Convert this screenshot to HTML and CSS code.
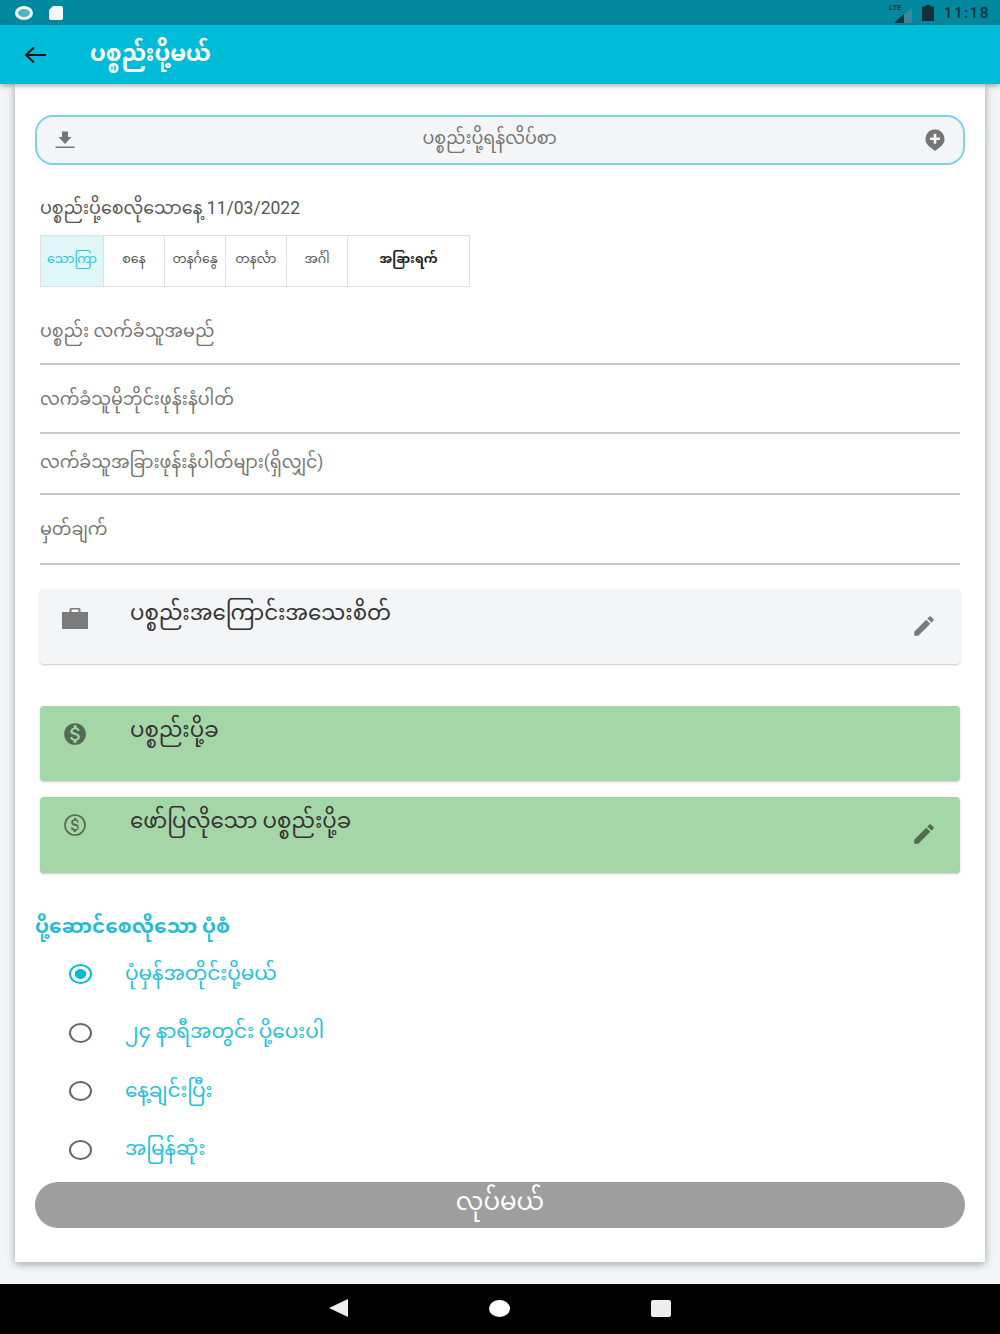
FILE: index.html
```html
<!DOCTYPE html>
<html lang="my">
<head>
    <meta charset="UTF-8">
    <title>ပစ္စည်းပို့မယ်</title>
    <link rel="stylesheet" href="styles.css">
</head>
<body>
    <div class="status-bar">
        <div class="status-left">
            <span class="status-ring"></span>
            <svg class="status-card" viewBox="0 0 16 16"><path d="M5 1h8a2 2 0 0 1 2 2v10a2 2 0 0 1-2 2H3a2 2 0 0 1-2-2V5z" fill="#f2fafb"/></svg>
        </div>
        <div class="status-right">
            <svg class="status-signal" viewBox="0 0 24 20"><text x="0" y="7" class="lte-text">LTE</text><path d="M23 5v15H5z" fill="#3f8796"/><path d="M15 11v9H5z" fill="#14343e"/></svg>
            <svg class="status-battery" viewBox="0 0 12 16"><path d="M3.500 0h5v1.500H12V16H0V1.500h3.500z" fill="#10303a"/></svg>
            <span class="status-time">11:18</span>
        </div>
    </div>

    <header class="app-bar">
        <svg class="back-icon" viewBox="0 0 24 24"><path d="M23 12H3M11 4.500 3 12l8 7.500"/></svg>
        <h1>ပစ္စည်းပို့မယ်</h1>
    </header>

    <main class="sheet">
        <div class="upload-row">
            <svg class="icon-grey" viewBox="0 0 24 24"><path d="M15 9h3.500L12 16 5.500 9H9V3.500h6zM2.500 18.500h19V20h-19z"/></svg>
            <span class="upload-text">ပစ္စည်းပို့ရန်လိပ်စာ</span>
            <svg class="icon-grey" viewBox="0 0 24 24"><path d="M12 1.500a9.500 9.500 0 0 0-6.700 16.200L12 23l6.700-5.300A9.500 9.500 0 0 0 12 1.500zm5 10.500h-3.700v3.700h-2.600V12H7V9.400h3.700V5.700h2.600v3.700H17z" fill-rule="evenodd"/></svg>
        </div>

        <p class="date-line">ပစ္စည်းပို့စေလိုသောနေ့ 11/03/2022</p>

        <div class="tabs">
            <div class="tab tab-active">သောကြာ</div>
            <div class="tab">စနေ</div>
            <div class="tab">တနင်္ဂနွေ</div>
            <div class="tab">တနင်္လာ</div>
            <div class="tab">အင်္ဂါ</div>
            <div class="tab tab-other">အခြားရက်</div>
        </div>

        <div class="field field-a">ပစ္စည်း လက်ခံသူအမည်</div>
        <div class="field field-b">လက်ခံသူမိုဘိုင်းဖုန်းနံပါတ်</div>
        <div class="field field-c">လက်ခံသူအခြားဖုန်းနံပါတ်များ(ရှိလျှင်)</div>
        <div class="field field-d">မှတ်ချက်</div>

        <div class="card card-grey">
            <svg class="card-icon" viewBox="0 0 26 24"><path d="M9 3h8a1.500 1.500 0 0 1 1.500 1.500V7H26v17H0V7h7.500V4.500A1.500 1.500 0 0 1 9 3zm.500 1.500V7h7V4.500z" fill-rule="evenodd"/></svg>
            <span class="card-text">ပစ္စည်းအကြောင်းအသေးစိတ်</span>
            <svg class="edit-icon" viewBox="0 0 24 24"><path d="M3 17.250V21h3.750L17.800 9.940l-3.750-3.750zM20.700 7.040a1 1 0 0 0 0-1.410l-2.340-2.340a1 1 0 0 0-1.410 0l-1.830 1.830 3.750 3.750z"/></svg>
        </div>

        <div class="card card-green card-first">
            <svg class="card-icon" viewBox="0 0 24 24"><path d="M12 2a10 10 0 1 0 0 20 10 10 0 0 0 0-20zm1.400 16.100V20h-2.700v-1.900c-1.700-.4-3.100-1.500-3.200-3.400h2c.1 1 .8 1.800 2.600 1.800 1.900 0 2.300-.9 2.300-1.500 0-.8-.4-1.500-2.600-2-2.400-.6-4.100-1.600-4.100-3.600 0-1.700 1.400-2.800 3.100-3.200V4h2.700v1.900c1.900.5 2.800 1.900 2.900 3.400h-2c-.1-1.100-.6-1.800-2.200-1.800-1.500 0-2.400.7-2.400 1.600 0 .8.600 1.300 2.600 1.900 2 .5 4.100 1.400 4.100 3.800 0 1.800-1.300 2.800-3 3.300z"/></svg>
            <span class="card-text">ပစ္စည်းပို့ခ</span>
        </div>

        <div class="card card-green card-last">
            <svg class="card-icon" viewBox="0 0 24 24"><path d="M12 2a10 10 0 1 0 0 20 10 10 0 0 0 0-20zm0 18.500a8.500 8.500 0 1 1 0-17 8.500 8.500 0 0 1 0 17z"/><path d="M12.300 11.100c-1.700-.5-2.200-.9-2.200-1.600 0-.8.700-1.400 2-1.400 1.300 0 1.800.6 1.900 1.500h1.500c-.1-1.300-.8-2.400-2.400-2.800V5.500h-2v1.300c-1.500.3-2.600 1.300-2.600 2.800 0 1.800 1.500 2.600 3.600 3.100 1.900.5 2.300 1.100 2.300 1.800 0 .5-.4 1.300-2 1.300-1.500 0-2.200-.7-2.300-1.500H8.100c.1 1.600 1.300 2.500 2.700 2.800v1.400h2v-1.400c1.500-.3 2.700-1.200 2.700-2.800 0-2.200-1.700-3.200-3.200-3.700z"/></svg>
            <span class="card-text">ဖော်ပြလိုသော ပစ္စည်းပို့ခ</span>
            <svg class="edit-icon" viewBox="0 0 24 24"><path d="M3 17.250V21h3.750L17.800 9.940l-3.750-3.750zM20.700 7.040a1 1 0 0 0 0-1.410l-2.340-2.340a1 1 0 0 0-1.410 0l-1.830 1.830 3.750 3.750z"/></svg>
        </div>

        <h2 class="section-title">ပို့ဆောင်စေလိုသော ပုံစံ</h2>

        <div class="radio-list">
            <div class="radio-row"><span class="radio radio-on"></span><span class="radio-label">ပုံမှန်အတိုင်းပို့မယ်</span></div>
            <div class="radio-row"><span class="radio"></span><span class="radio-label">၂၄ နာရီအတွင်း ပို့ပေးပါ</span></div>
            <div class="radio-row"><span class="radio"></span><span class="radio-label">နေ့ချင်းပြီး</span></div>
            <div class="radio-row"><span class="radio"></span><span class="radio-label">အမြန်ဆုံး</span></div>
        </div>

        <button class="submit">လုပ်မယ်</button>
    </main>

    <div class="nav-bar">
        <span class="nav-back"></span>
        <span class="nav-home"></span>
        <span class="nav-recent"></span>
    </div>
</body>
</html>
```

FILE: styles.css
```css
* {
    box-sizing: border-box;
}

body {
    margin: 0;
    display: flex;
    flex-direction: column;
    height: 1334px;
    overflow: hidden;
    background: #f4f5f7;
    color: #616161;
    font-family: "Roboto", "Noto Sans Myanmar", "Padauk", "Noto Sans", sans-serif;
}

.status-bar {
    height: 25px;
    flex: none;
    display: flex;
    justify-content: space-between;
    align-items: center;
    padding: 0 10px 0 15px;
    background: #00889f;
}

.status-left,
.status-right {
    display: flex;
    align-items: center;
}

.status-ring {
    width: 18px;
    height: 14px;
    border: 3px solid #f2fafb;
    border-radius: 50%;
    background: #4fb3c4;
}

.status-card {
    width: 16px;
    height: 16px;
    margin-left: 15px;
}

.status-signal {
    width: 24px;
    height: 20px;
}

.lte-text {
    font-family: "Liberation Sans", sans-serif;
    font-size: 7px;
    font-weight: 700;
    fill: #14343e;
}

.status-battery {
    width: 12px;
    height: 16px;
    margin-left: 9px;
}

.status-time {
    margin-left: 10px;
    font-family: "Roboto", sans-serif;
    font-size: 15.500px;
    font-weight: 500;
    letter-spacing: 1.400px;
    color: #14343e;
}

.app-bar {
    position: relative;
    height: 59px;
    flex: none;
    display: flex;
    align-items: center;
    padding: 0 23px;
    background: #00bcd8;
    box-shadow: 0 2px 5px rgba(0, 0, 0, 0.3);
}

.back-icon {
    width: 24px;
    height: 24px;
    fill: none;
    stroke: #111;
    stroke-width: 2;
}

.app-bar h1 {
    margin: 0 0 4px 43px;
    font-size: 22.500px;
    line-height: 34px;
    font-weight: 700;
    color: #fff;
}

.sheet {
    flex: 1;
    margin: 0 15px 22px;
    padding: 31px 25px 0;
    background: #fff;
    box-shadow: 0 2px 8px rgba(0, 0, 0, 0.35);
}

.upload-row {
    height: 50px;
    margin: 0 -5px;
    display: flex;
    align-items: center;
    padding: 0 16px;
    background: #f4f5f7;
    border: 2px solid #7cd4e5;
    border-radius: 18px;
}

.upload-text {
    flex: 1;
    padding-right: 21px;
    text-align: center;
    font-size: 17.500px;
    color: #757575;
}

.icon-grey {
    width: 24px;
    height: 24px;
    fill: #757575;
}

.date-line {
    margin: 29px 0 13px;
    font-size: 17.500px;
    line-height: 28px;
    color: #555;
}

.tabs {
    width: 430px;
    height: 52px;
    display: flex;
    border: 1px solid #e0e0e0;
}

.tab {
    width: 61px;
    display: flex;
    align-items: center;
    justify-content: center;
    padding-bottom: 2px;
    font-size: 12.500px;
    color: #555;
    border-right: 1px solid #e0e0e0;
}

.tab-active {
    width: 63px;
    background: #e0f7fa;
    color: #26c6da;
}

.tab-other {
    flex: 1;
    border-right: none;
    font-weight: 700;
    color: #212121;
}

.field {
    display: flex;
    align-items: center;
    font-size: 17.500px;
    color: #757575;
    border-bottom: 2px solid #c8c8c8;
}

.field-a {
    height: 78px;
    padding-top: 16px;
}

.field-b {
    height: 69px;
    padding-top: 4px;
}

.field-c {
    height: 61px;
}

.field-d {
    height: 70px;
    padding-top: 4px;
}

.card {
    position: relative;
    height: 75px;
    margin-top: 16px;
    display: flex;
    align-items: flex-start;
    padding: 6px 22px;
    border-radius: 4px;
    box-shadow: 0 1px 2px rgba(0, 0, 0, 0.22);
    font-size: 21.300px;
    line-height: 30px;
    color: #333;
}

.card-grey {
    margin-top: 24px;
    background: #f4f5f7;
}

.card-green {
    background: #a5d6a7;
}

.card-first {
    margin-top: 42px;
}

.card-last {
    height: 76px;
}

.card-icon {
    width: 26px;
    height: 26px;
    margin-top: 9px;
    flex: none;
    fill: rgba(0, 0, 0, 0.5);
}

.card-text {
    margin: 3px 0 0 42px;
}

.edit-icon {
    position: absolute;
    right: 23px;
    top: 24px;
    width: 26px;
    height: 26px;
    fill: rgba(0, 0, 0, 0.5);
}

.section-title {
    margin: 36px 0 0 -5px;
    font-size: 20px;
    line-height: 34px;
    font-weight: 700;
    color: #26bcd6;
}

.radio-list {
    margin-top: 2px;
}

.radio-row {
    height: 58.500px;
    display: flex;
    align-items: center;
    gap: 33px;
    padding-left: 29px;
    font-size: 20px;
    color: #26c0da;
}

.radio-label {
    margin-top: 2px;
}

.radio {
    width: 23px;
    height: 20px;
    flex: none;
    border: 2px solid #666;
    border-radius: 50%;
}

.radio-on {
    border-color: #00bcd4;
    background: radial-gradient(ellipse, #00bcd4 0 5.500px, transparent 6px);
}

.submit {
    display: block;
    width: 930px;
    height: 46px;
    margin: 3px 0 0 -5px;
    padding: 0 0 6px;
    border: none;
    border-radius: 23px;
    background: #9e9e9e;
    color: #fff;
    font-family: inherit;
    font-size: 24.500px;
    line-height: 32px;
}

.nav-bar {
    height: 50px;
    flex: none;
    display: flex;
    justify-content: center;
    align-items: center;
    gap: 141px;
    padding-bottom: 2px;
    background: #000;
}

.nav-back {
    width: 0;
    height: 0;
    border-top: 9px solid transparent;
    border-bottom: 9px solid transparent;
    border-right: 19px solid #eee;
}

.nav-home {
    width: 21px;
    height: 17px;
    border-radius: 50%;
    background: #fff;
}

.nav-recent {
    width: 20px;
    height: 17px;
    border-radius: 2px;
    background: #eee;
}
```
